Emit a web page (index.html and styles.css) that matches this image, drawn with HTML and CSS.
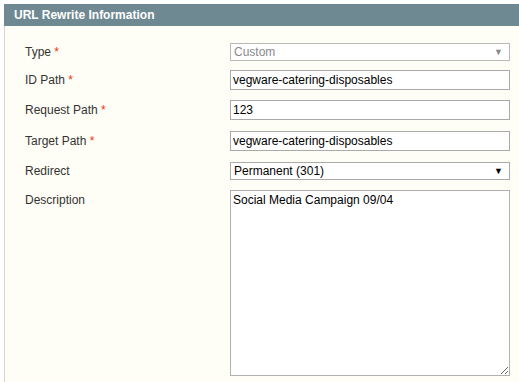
FILE: index.html
```html
<!DOCTYPE html>
<html>
<head>
<meta charset="utf-8">
<link rel="stylesheet" href="styles.css">
</head>
<body>
<div class="box">
  <div class="head">URL Rewrite Information</div>
  <div class="fieldset">
    <div class="row">
      <div class="label">Type <span class="req">*</span></div>
      <div class="select disabled"><span>Custom</span><span class="arrow">&#9660;</span></div>
    </div>
    <div class="row">
      <div class="label">ID Path <span class="req">*</span></div>
      <input class="text" type="text" value="vegware-catering-disposables">
    </div>
    <div class="row">
      <div class="label">Request Path <span class="req">*</span></div>
      <input class="text" type="text" value="123">
    </div>
    <div class="row">
      <div class="label">Target Path <span class="req">*</span></div>
      <input class="text" type="text" value="vegware-catering-disposables">
    </div>
    <div class="row">
      <div class="label">Redirect</div>
      <div class="select"><span>Permanent (301)</span><span class="arrow">&#9660;</span></div>
    </div>
    <div class="row top">
      <div class="label desc">Description</div>
      <textarea class="area">Social Media Campaign 09/04</textarea>
    </div>
  </div>
</div>
</body>
</html>
```

FILE: styles.css
```css
html, body {
  margin: 0;
  padding: 0;
  overflow: hidden;
  background: #ffffff;
}
body {
  font-family: "Liberation Sans", Arial, sans-serif;
  font-size: 12px;
  color: #333333;
  padding: 4px 0 0 4px;
}
.box {
  width: 515px;
}
.head {
  background: #6f8992;
  color: #ffffff;
  font-weight: bold;
  height: 22px;
  line-height: 22px;
  padding-left: 10px;
  font-size: 12px;
}
.fieldset {
  background: #fefef6;
  border-left: 1px solid #d6d6d6;
  padding: 17px 0 6px 20px;
  display: flex;
  flex-direction: column;
}
.row {
  display: flex;
  align-items: center;
  margin-bottom: 10px;
}
.row:nth-child(1) { margin-bottom: 9px; }
.row:nth-child(3), .row:nth-child(4) { margin-bottom: 11px; }
.row.top {
  align-items: flex-start;
  margin-bottom: 0;
}
.label {
  width: 205px;
  color: #333333;
}
.label.desc {
  padding-top: 3px;
}
.req {
  color: #eb340a;
}
.select, .text, .area {
  box-sizing: border-box;
  width: 280px;
  border: 1px solid #aaaaaa;
  background: #ffffff;
  font-family: "Liberation Sans", Arial, sans-serif;
  font-size: 12px;
  color: #000000;
  margin: 0;
}
.select {
  height: 18px;
  display: flex;
  align-items: center;
  justify-content: space-between;
  padding: 0 6px 0 3px;
}
.select.disabled {
  color: #8a8a8a;
  border-color: #b8b8b8;
}
.arrow {
  font-size: 9px;
  color: #000;
}
.select.disabled .arrow {
  color: #8a8a8a;
}
.text {
  height: 20px;
  padding: 0 2px;
  outline: none;
}
.area {
  display: block;
  height: 186px;
  padding: 2px;
  resize: vertical;
  border-color: #b0b0b0;
  outline: none;
}
```
